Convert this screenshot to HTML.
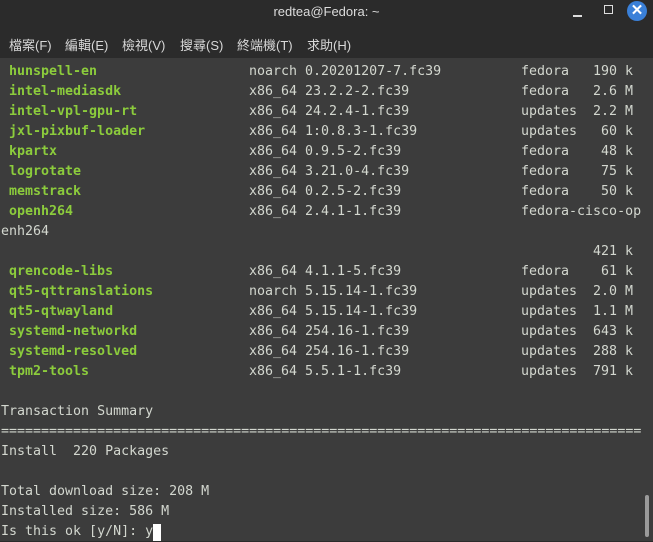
<!DOCTYPE html>
<html><head><meta charset="utf-8"><style>
*{margin:0;padding:0;box-sizing:border-box}
body{width:653px;height:541px;overflow:hidden;background:#2b2b2b;position:relative;font-family:"Liberation Sans","Noto Sans CJK TC",sans-serif}
.title{position:absolute;top:0;left:0;width:653px;height:24px;text-align:center;color:#dcdcdc;font-size:13px;line-height:24px}
.menu{position:absolute;top:30px;left:0;height:28px;width:653px}
.menu span{position:absolute;top:5px;color:#d8d8d8;font-size:13px}
.term{position:absolute;top:58px;left:0;width:653px;height:483px;background:#3c3c3c}
.row{position:absolute;left:1px;height:20px;line-height:20px;font-family:"DejaVu Sans Mono","Liberation Mono",monospace;font-size:13.3px;color:#d3d7cf;white-space:pre}
.row span{position:absolute;top:0}
.g{color:#8ccc3c;font-weight:bold;left:8px}
.a{left:248px}.v{left:296px}.r{left:520px}.s{left:592px;width:40px;text-align:right}
</style></head><body>
<div class="title">redtea@Fedora: ~</div>
<div style="position:absolute;left:573px;top:15px;width:9px;height:1.5px;background:#ddd"></div>
<div style="position:absolute;left:604px;top:5px;width:9px;height:9px;border:1.5px solid #ddd"></div>
<div style="position:absolute;left:627px;top:1px;width:20px;height:20px;border-radius:50%;background:#3a80d8;color:#fff;font-size:15px;font-weight:bold;text-align:center;line-height:20px">✕</div>
<div class="menu">
<span style="left:9px">檔案(F)</span><span style="left:65px">編輯(E)</span><span style="left:122px">檢視(V)</span><span style="left:180px">搜尋(S)</span><span style="left:237px">終端機(T)</span><span style="left:307px">求助(H)</span>
</div>
<div class="term">
<div class="row" style="top:4px"><span class="g">hunspell-en</span><span class="a">noarch 0.20201207-7.fc39</span><span class="r">fedora</span><span class="s">190 k</span></div>
<div class="row" style="top:24px"><span class="g">intel-mediasdk</span><span class="a">x86_64 23.2.2-2.fc39</span><span class="r">fedora</span><span class="s">2.6 M</span></div>
<div class="row" style="top:44px"><span class="g">intel-vpl-gpu-rt</span><span class="a">x86_64 24.2.4-1.fc39</span><span class="r">updates</span><span class="s">2.2 M</span></div>
<div class="row" style="top:64px"><span class="g">jxl-pixbuf-loader</span><span class="a">x86_64 1:0.8.3-1.fc39</span><span class="r">updates</span><span class="s">60 k</span></div>
<div class="row" style="top:84px"><span class="g">kpartx</span><span class="a">x86_64 0.9.5-2.fc39</span><span class="r">fedora</span><span class="s">48 k</span></div>
<div class="row" style="top:104px"><span class="g">logrotate</span><span class="a">x86_64 3.21.0-4.fc39</span><span class="r">fedora</span><span class="s">75 k</span></div>
<div class="row" style="top:124px"><span class="g">memstrack</span><span class="a">x86_64 0.2.5-2.fc39</span><span class="r">fedora</span><span class="s">50 k</span></div>
<div class="row" style="top:144px"><span class="g">openh264</span><span class="a">x86_64 2.4.1-1.fc39</span><span class="r">fedora-cisco-op</span></div>
<div class="row" style="top:164px">enh264</div>
<div class="row" style="top:184px"><span class="s">421 k</span></div>
<div class="row" style="top:204px"><span class="g">qrencode-libs</span><span class="a">x86_64 4.1.1-5.fc39</span><span class="r">fedora</span><span class="s">61 k</span></div>
<div class="row" style="top:224px"><span class="g">qt5-qttranslations</span><span class="a">noarch 5.15.14-1.fc39</span><span class="r">updates</span><span class="s">2.0 M</span></div>
<div class="row" style="top:244px"><span class="g">qt5-qtwayland</span><span class="a">x86_64 5.15.14-1.fc39</span><span class="r">updates</span><span class="s">1.1 M</span></div>
<div class="row" style="top:264px"><span class="g">systemd-networkd</span><span class="a">x86_64 254.16-1.fc39</span><span class="r">updates</span><span class="s">643 k</span></div>
<div class="row" style="top:284px"><span class="g">systemd-resolved</span><span class="a">x86_64 254.16-1.fc39</span><span class="r">updates</span><span class="s">288 k</span></div>
<div class="row" style="top:304px"><span class="g">tpm2-tools</span><span class="a">x86_64 5.5.1-1.fc39</span><span class="r">updates</span><span class="s">791 k</span></div>
<div class="row" style="top:344px">Transaction Summary</div>
<div class="row" style="top:364px">================================================================================</div>
<div class="row" style="top:384px">Install  220 Packages</div>
<div class="row" style="top:424px">Total download size: 208 M</div>
<div class="row" style="top:444px">Installed size: 586 M</div>
<div class="row" style="top:464px">Is this ok [y/N]: y<span style="left:152px;top:2px;width:8px;height:17px;background:#fff"></span></div>
<div style="position:absolute;left:645px;top:437px;width:4px;height:42px;border-radius:2px;background:#9a9a9a"></div>
</div>
</body></html>
